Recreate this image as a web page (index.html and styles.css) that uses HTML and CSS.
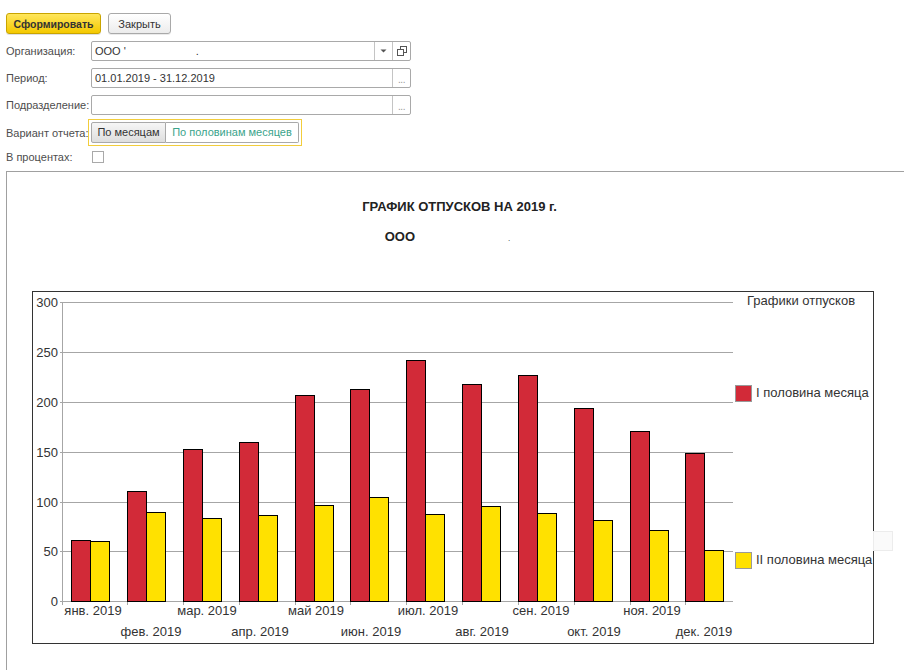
FILE: index.html
```html
<!DOCTYPE html>
<html lang="ru">
<head>
<meta charset="utf-8">
<title>График отпусков</title>
<link rel="stylesheet" href="styles.css">
</head>
<body>
<div class="toolbar">
  <button class="btn btn-primary">Сформировать</button>
  <button class="btn btn-secondary">Закрыть</button>
</div>

<div class="form">
  <div class="row row-field">
    <div class="label">Организация:</div>
    <div class="field">
      <div class="field-value">ООО '<span class="blank-org"></span>.</div>
      <div class="field-btn">
        <svg width="7" height="4" viewBox="0 0 7 4"><path d="M0.5 0.5 L6.5 0.5 L3.5 3.5 Z" fill="#555"/></svg>
      </div>
      <div class="field-btn">
        <svg width="10" height="10" viewBox="0 0 10 10"><rect x="3.5" y="0.5" width="6" height="6" fill="none" stroke="#555"/><rect x="0.5" y="3.5" width="6" height="6" fill="#fff" stroke="#555"/></svg>
      </div>
    </div>
  </div>
  <div class="row row-field">
    <div class="label">Период:</div>
    <div class="field">
      <div class="field-value">01.01.2019 - 31.12.2019</div>
      <div class="field-btn dots">...</div>
    </div>
  </div>
  <div class="row row-field">
    <div class="label">Подразделение:</div>
    <div class="field">
      <div class="field-value"></div>
      <div class="field-btn dots">...</div>
    </div>
  </div>
  <div class="row row-radio">
    <div class="label">Вариант отчета:</div>
    <div class="radio-group">
      <div class="seg seg-active">По месяцам</div>
      <div class="seg seg-other">По половинам месяцев</div>
    </div>
  </div>
  <div class="row row-check">
    <div class="label">В процентах:</div>
    <div class="checkbox"></div>
  </div>
</div>

<div class="report">
  <div class="report-title">ГРАФИК ОТПУСКОВ НА 2019 г.</div>
  <div class="report-sub"><span>ООО</span><span class="blank-sub"></span><span class="dot">.</span></div>
  <div class="chart">
    <svg width="862" height="354" viewBox="0 0 862 354" font-family="Liberation Sans, Arial, sans-serif" font-size="13">
      <rect x="0.5" y="0.5" width="841" height="352" fill="#fff" stroke="#333"/>
      <rect x="841.5" y="240.5" width="19" height="19" fill="#fafafa" stroke="#ececec"/>
      <g stroke="#a6a6a6" stroke-width="1">
        <line x1="28" y1="11.5" x2="701" y2="11.5"/>
        <line x1="28" y1="61.5" x2="701" y2="61.5"/>
        <line x1="28" y1="111.5" x2="701" y2="111.5"/>
        <line x1="28" y1="161.5" x2="701" y2="161.5"/>
        <line x1="28" y1="211.5" x2="701" y2="211.5"/>
        <line x1="28" y1="260.5" x2="701" y2="260.5"/>
        <line x1="28" y1="310.5" x2="701" y2="310.5"/>
        <line x1="30.5" y1="11" x2="30.5" y2="314"/>
        <line x1="95.5" y1="310" x2="95.5" y2="314"/>
        <line x1="151.5" y1="310" x2="151.5" y2="314"/>
        <line x1="207.5" y1="310" x2="207.5" y2="314"/>
        <line x1="263.5" y1="310" x2="263.5" y2="314"/>
        <line x1="318.5" y1="310" x2="318.5" y2="314"/>
        <line x1="374.5" y1="310" x2="374.5" y2="314"/>
        <line x1="430.5" y1="310" x2="430.5" y2="314"/>
        <line x1="486.5" y1="310" x2="486.5" y2="314"/>
        <line x1="542.5" y1="310" x2="542.5" y2="314"/>
        <line x1="598.5" y1="310" x2="598.5" y2="314"/>
        <line x1="653.5" y1="310" x2="653.5" y2="314"/>
      </g>
      <g fill="#333" text-anchor="end">
        <text x="26" y="16">300</text>
        <text x="26" y="66">250</text>
        <text x="26" y="116">200</text>
        <text x="26" y="166">150</text>
        <text x="26" y="216">100</text>
        <text x="26" y="265">50</text>
        <text x="26" y="315">0</text>
      </g>
      <g stroke="#000" stroke-width="1">
        <g fill="#d22a38">
          <rect x="39.5" y="249.5" width="19" height="61"/>
          <rect x="95.5" y="200.5" width="19" height="110"/>
          <rect x="151.5" y="158.5" width="19" height="152"/>
          <rect x="207.5" y="151.5" width="19" height="159"/>
          <rect x="263.5" y="104.5" width="19" height="206"/>
          <rect x="318.5" y="98.5" width="19" height="212"/>
          <rect x="374.5" y="69.5" width="19" height="241"/>
          <rect x="430.5" y="93.5" width="19" height="217"/>
          <rect x="486.5" y="84.5" width="19" height="226"/>
          <rect x="542.5" y="117.5" width="19" height="193"/>
          <rect x="598.5" y="140.5" width="19" height="170"/>
          <rect x="653.5" y="162.5" width="19" height="148"/>
        </g>
        <g fill="#ffe100">
          <rect x="58.5" y="250.5" width="19" height="60"/>
          <rect x="114.5" y="221.5" width="19" height="89"/>
          <rect x="170.5" y="227.5" width="19" height="83"/>
          <rect x="226.5" y="224.5" width="19" height="86"/>
          <rect x="282.5" y="214.5" width="19" height="96"/>
          <rect x="337.5" y="206.5" width="19" height="104"/>
          <rect x="393.5" y="223.5" width="19" height="87"/>
          <rect x="449.5" y="215.5" width="19" height="95"/>
          <rect x="505.5" y="222.5" width="19" height="88"/>
          <rect x="561.5" y="229.5" width="19" height="81"/>
          <rect x="617.5" y="239.5" width="19" height="71"/>
          <rect x="672.5" y="259.5" width="19" height="51"/>
        </g>
      </g>
      <g fill="#333" text-anchor="middle">
        <text x="61" y="324">янв. 2019</text>
        <text x="119" y="345">фев. 2019</text>
        <text x="175" y="324">мар. 2019</text>
        <text x="228" y="345">апр. 2019</text>
        <text x="284" y="324">май 2019</text>
        <text x="339" y="345">июн. 2019</text>
        <text x="396" y="324">июл. 2019</text>
        <text x="450" y="345">авг. 2019</text>
        <text x="509" y="324">сен. 2019</text>
        <text x="562" y="345">окт. 2019</text>
        <text x="620" y="324">ноя. 2019</text>
        <text x="672" y="345">дек. 2019</text>
      </g>
      <text x="715" y="14" fill="#333">Графики отпусков</text>
      <rect x="703.5" y="94.5" width="16" height="16" fill="#d22a38" stroke="#999"/>
      <text x="724" y="106" fill="#333">I половина месяца</text>
      <rect x="703.5" y="261.5" width="16" height="16" fill="#ffe100" stroke="#999"/>
      <text x="724" y="273" fill="#333">II половина месяца</text>
    </svg>
  </div>
</div>
</body>
</html>
```

FILE: styles.css
```css
html, body {
  margin: 0;
  padding: 0;
  background: #fff;
}
body {
  width: 904px;
  height: 670px;
  overflow: hidden;
  font-family: "Liberation Sans", Arial, sans-serif;
  font-size: 11px;
  color: #333;
}

.toolbar {
  display: flex;
  gap: 7px;
  padding: 13px 0 0 6px;
}
.btn {
  height: 21px;
  box-sizing: border-box;
  border-radius: 3px;
  font-family: "Liberation Sans", Arial, sans-serif;
  font-size: 11px;
  color: #333;
  padding: 0;
  margin: 0;
  cursor: default;
}
.btn-primary {
  width: 95px;
  font-weight: bold;
  font-size: 10.5px;
  background: linear-gradient(#ffe65c, #f4c900);
  border: 1px solid #c9a400;
  box-shadow: 0 1px 0 rgba(0, 0, 0, 0.12);
}
.btn-secondary {
  width: 63px;
  background: linear-gradient(#ffffff, #ececec);
  border: 1px solid #a9a9a9;
  box-shadow: 0 1px 0 rgba(0, 0, 0, 0.08);
}

.form {
  display: flex;
  flex-direction: column;
}
.row {
  display: flex;
  align-items: center;
  padding-left: 6px;
}
.row-field {
  height: 20px;
  margin-top: 7px;
}
.row-radio {
  height: 27px;
  margin-top: 4px;
}
.row-check {
  height: 12px;
  margin-top: 5px;
}
.label {
  width: 85px;
  flex-shrink: 0;
  color: #4d4d4d;
  white-space: nowrap;
}
.field {
  width: 320px;
  height: 20px;
  box-sizing: border-box;
  border: 1px solid #a9a9a9;
  border-radius: 2px;
  display: flex;
  background: #fff;
}
.field-value {
  flex: 1;
  padding-left: 3px;
  line-height: 18px;
  color: #333;
  white-space: nowrap;
  overflow: hidden;
}
.blank-org {
  display: inline-block;
  width: 70px;
}
.field-btn {
  width: 17px;
  border-left: 1px solid #c4c4c4;
  display: flex;
  align-items: center;
  justify-content: center;
}
.field-btn.dots {
  align-items: flex-end;
  color: #999;
  font-size: 10px;
  line-height: 14px;
  letter-spacing: -0.5px;
}

.radio-group {
  margin-left: -3px;
  height: 27px;
  box-sizing: border-box;
  border: 1px solid #f2cd3c;
  padding: 2px;
  display: flex;
}
.seg {
  height: 21px;
  box-sizing: border-box;
  border: 1px solid #a9a9a9;
  line-height: 19px;
  text-align: center;
  white-space: nowrap;
}
.seg-active {
  width: 75px;
  border-radius: 2px 0 0 2px;
  background: linear-gradient(#f6f6f6, #dedede);
  color: #333;
}
.seg-other {
  width: 133px;
  border-left: none;
  border-radius: 0 2px 2px 0;
  background: #fff;
  color: #3aa38b;
}

.checkbox {
  width: 12px;
  height: 12px;
  box-sizing: border-box;
  margin-left: 1px;
  border: 1px solid #a9a9a9;
  background: #fff;
}

.report {
  margin: 8px 0 0 6px;
  border-top: 1px solid #a0a0a0;
  border-left: 1px solid #a0a0a0;
  height: 500px;
}
.report-title {
  margin-top: 28px;
  padding-left: 8px;
  text-align: center;
  font-weight: bold;
  font-size: 13px;
  line-height: 14px;
  color: #222;
}
.report-sub {
  margin-top: 16px;
  padding-right: 16px;
  text-align: center;
  font-weight: bold;
  font-size: 13px;
  line-height: 14px;
  color: #222;
}
.blank-sub {
  display: inline-block;
  width: 93px;
}
.dot {
  font-weight: normal;
  font-size: 8px;
}
.chart {
  margin: 45px 0 0 25px;
  line-height: 0;
}
.chart svg {
  display: block;
}
```
